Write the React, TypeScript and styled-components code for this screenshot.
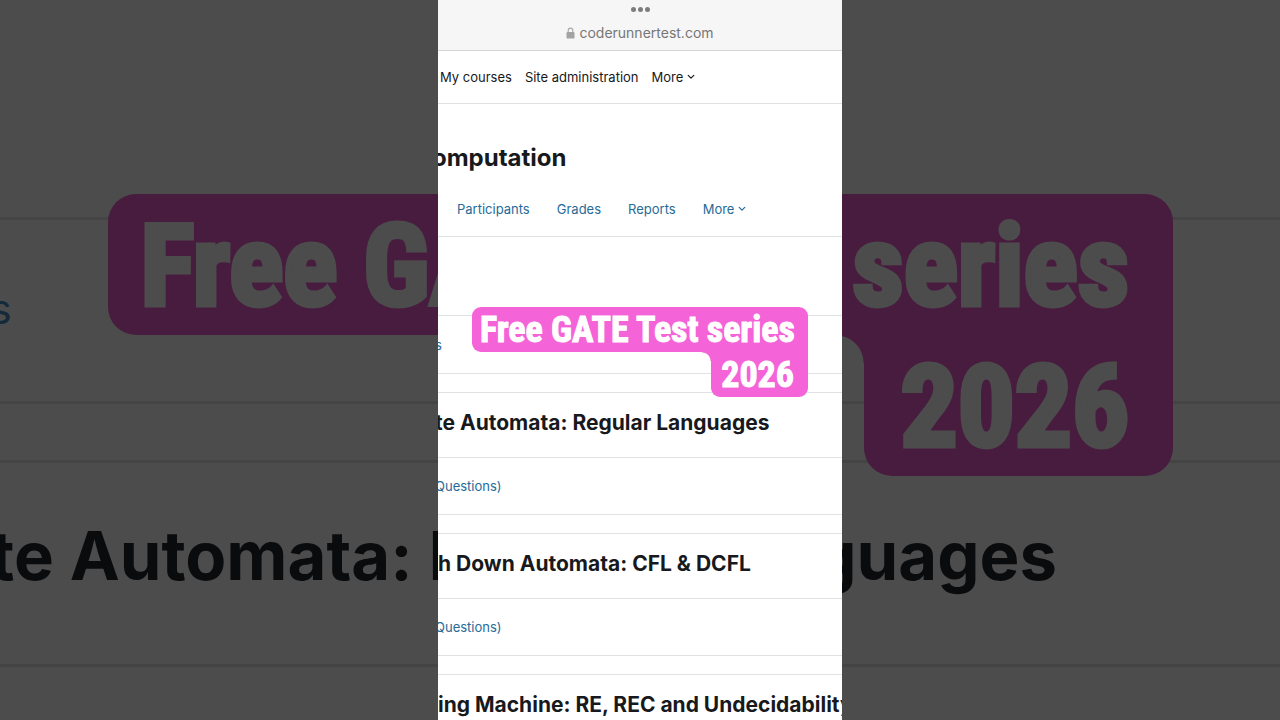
import React from "react";
import styled, { createGlobalStyle, css } from "styled-components";

const GlobalStyle = createGlobalStyle`
  * { box-sizing: border-box; }
  body {
    margin: 0;
    background: #4c4c4c;
    font-family: Inter, "Liberation Sans", sans-serif;
    color: #17191c;
  }
  h1, h2, p { margin: 0; }
  a { color: inherit; text-decoration: none; }
`;

const line = "#e1e2e4";
const dimLine = "#444444";

const Stage = styled.main`
  display: grid;
  grid-template-columns: minmax(0, 1fr);
  height: 100vh;
  overflow: hidden;
`;

/* Enlarged, darkened copy of the page behind the phone */
const Backdrop = styled.div`
  grid-area: 1 / 1;
  position: relative;
  overflow: hidden;
  background: #4c4c4c;
  color: #0a0b0d;
  padding-top: 217px;
`;

const DimRow = styled.div<{ $height: number }>`
  display: flex;
  align-items: center;
  height: ${(p) => p.$height}px;
  border-top: 3px solid ${dimLine};
  white-space: nowrap;
`;

const DimLink = styled.p`
  margin-left: -10px;
  padding-bottom: 4px;
  font-size: 41px;
  color: #14293a;
`;

const DimHeading = styled.p`
  margin-left: -10px;
  padding-bottom: 16px;
  font-size: 67px;
  font-weight: 700;
`;

const Phone = styled.div`
  grid-area: 1 / 1;
  position: relative;
  justify-self: center;
  width: 404px;
  max-width: 100%;
  overflow: hidden;
  background: #ffffff;
`;

const AddressBar = styled.header`
  display: flex;
  flex-direction: column;
  align-items: center;
  gap: 11px;
  height: 51px;
  padding-top: 7px;
  background: #f6f6f6;
  border-bottom: 1px solid #d6d6d6;
`;

const MenuButton = styled.button`
  display: flex;
  gap: 2px;
  padding: 0;
  border: 0;
  background: none;
`;

const Dot = styled.span`
  width: 5px;
  height: 5px;
  border-radius: 50%;
  background: #7d7d7d;
`;

const Address = styled.p`
  display: flex;
  align-items: center;
  gap: 4px;
  font-size: 14px;
  line-height: 20px;
  color: #777777;
`;

const SiteNav = styled.nav`
  display: flex;
  align-items: center;
  gap: 13px;
  height: 53px;
  padding-left: 2px;
  border-bottom: 1px solid ${line};
  font-size: 13px;
  white-space: nowrap;
`;

const CourseTitle = styled.h1`
  height: 78px;
  margin-left: -6px;
  padding-top: 38px;
  font-size: 24px;
  line-height: 32px;
  font-weight: 700;
`;

const Tabs = styled.nav`
  display: flex;
  align-items: center;
  gap: 27px;
  height: 55px;
  padding-left: 19px;
  border-bottom: 1px solid ${line};
  font-size: 13px;
  color: #266b98;
  white-space: nowrap;
`;

const MoreButton = styled.button`
  display: flex;
  align-items: center;
  gap: 4px;
  padding: 0;
  border: 0;
  background: none;
  font: inherit;
  color: inherit;
`;

const Sections = styled.div`
  display: flex;
  flex-direction: column;
  gap: 18px;
  padding-top: 78px;
`;

const Section = styled.section`
  border-top: 1px solid ${line};
  border-bottom: 1px solid ${line};
  white-space: nowrap;
`;

const SectionHeading = styled.h2<{ $cut?: boolean }>`
  height: 64px;
  margin-left: ${(p) => (p.$cut ? -3 : 0)}px;
  padding-top: 14px;
  font-size: 21px;
  line-height: 32px;
  font-weight: 700;
`;

const Activity = styled.div<{ $ruled?: boolean }>`
  display: flex;
  align-items: center;
  height: 57px;
  ${(p) => p.$ruled && css`border-top: 1px solid ${line};`}
  font-size: 13px;
  color: #266b98;
`;

const ActivityLink = styled.a`
  margin-left: -3px;
`;

type Size = { $large?: boolean };

const Caption = styled.div<Size>`
  position: absolute;
  top: ${(p) => (p.$large ? 194 : 307)}px;
  left: 50%;
  margin-left: ${(p) => (p.$large ? -532 : -168)}px;
  width: ${(p) => (p.$large ? 1065 : 336)}px;
  display: flex;
  flex-direction: column;
  align-items: flex-end;
  font-family: "Roboto Condensed", "Liberation Sans Narrow", sans-serif;
  font-weight: 700;
  font-size: ${(p) => (p.$large ? 113 : 36)}px;
  line-height: ${(p) => (p.$large ? 137 : 43)}px;
  -webkit-text-stroke: ${(p) => (p.$large ? 5 : 1)}px currentColor;
  color: ${(p) => (p.$large ? "#4c4c4c" : "#ffffff")};
  white-space: nowrap;
`;

const CaptionTop = styled.p<Size>`
  width: 100%;
  padding: ${(p) => (p.$large ? "4px 44px 0 32px" : "2px 14px 0 8px")};
  text-align: right;
  background: ${(p) => (p.$large ? "#481c3f" : "#f463d7")};
  border-radius: ${(p) => (p.$large ? "28px 28px 0 28px" : "9px 9px 0 9px")};
`;

const CaptionBottom = styled.p<Size>`
  position: relative;
  width: ${(p) => (p.$large ? 309 : 97)}px;
  padding: ${(p) => (p.$large ? "4px 44px 0 0" : "2px 14px 0 0")};
  text-align: right;
  background: ${(p) => (p.$large ? "#481c3f" : "#f463d7")};
  border-radius: ${(p) => (p.$large ? "0 0 28px 28px" : "0 0 9px 9px")};

  /* concave corner where the two lines meet */
  &::before {
    content: "";
    position: absolute;
    top: 0;
    right: 100%;
    width: ${(p) => (p.$large ? 28 : 9)}px;
    height: ${(p) => (p.$large ? 28 : 9)}px;
    background: radial-gradient(
      circle at 0 100%,
      transparent ${(p) => (p.$large ? 27 : 8)}px,
      ${(p) => (p.$large ? "#481c3f" : "#f463d7")} ${(p) => (p.$large ? 28 : 9)}px
    );
  }
`;

const Lock = () => (
  <svg width="9" height="12" viewBox="0 0 9 12" aria-hidden="true">
    <path d="M2.2 5.5V3.4a2.3 2.3 0 0 1 4.6 0v2.1" fill="none" stroke="#a9a9a9" strokeWidth="1.1" />
    <rect x="0.5" y="5" width="8" height="6.6" rx="1.2" fill="#a3a3a3" />
  </svg>
);

const Chevron = () => (
  <svg width="8" height="6" viewBox="0 0 8 6" aria-hidden="true">
    <path d="M1.2 1.3 4 4.1 6.8 1.3" fill="none" stroke="currentColor" strokeWidth="1.2" strokeLinecap="round" strokeLinejoin="round" />
  </svg>
);

const More = () => (
  <MoreButton type="button">
    More <Chevron />
  </MoreButton>
);

const SeriesCaption = ({ large }: { large?: boolean }) => (
  <Caption $large={large}>
    <CaptionTop $large={large}>Free GATE Test series</CaptionTop>
    <CaptionBottom $large={large}>2026</CaptionBottom>
  </Caption>
);

const sections = [
  { title: "te Automata: Regular Languages", cut: true, activity: "Questions)" },
  { title: "h Down Automata: CFL & DCFL", activity: "Questions)" },
  { title: "ing Machine: RE, REC and Undecidability", activity: "Questions)" },
];

export default function App() {
  return (
    <>
      <GlobalStyle />
      <Stage>
        <Backdrop aria-hidden="true">
          <DimRow $height={184}>
            <DimLink>s</DimLink>
          </DimRow>
          <DimRow $height={59} />
          <DimRow $height={204}>
            <DimHeading>te Automata: Regular Languages</DimHeading>
          </DimRow>
          <DimRow $height={184} />
          <SeriesCaption large />
        </Backdrop>
        <Phone>
          <AddressBar>
            <MenuButton type="button" aria-label="Window menu">
              <Dot />
              <Dot />
              <Dot />
            </MenuButton>
            <Address>
              <Lock />
              coderunnertest.com
            </Address>
          </AddressBar>
          <SiteNav>
            <a href="#courses">My courses</a>
            <a href="#admin">Site administration</a>
            <More />
          </SiteNav>
          <CourseTitle>omputation</CourseTitle>
          <Tabs>
            <a href="#participants">Participants</a>
            <a href="#grades">Grades</a>
            <a href="#reports">Reports</a>
            <More />
          </Tabs>
          <Sections>
            <Section>
              <Activity>
                <ActivityLink href="#announcements">s</ActivityLink>
              </Activity>
            </Section>
            {sections.map((s) => (
              <Section key={s.title}>
                <SectionHeading $cut={s.cut}>{s.title}</SectionHeading>
                <Activity $ruled>
                  <ActivityLink href="#quiz">{s.activity}</ActivityLink>
                </Activity>
              </Section>
            ))}
          </Sections>
          <SeriesCaption />
        </Phone>
      </Stage>
    </>
  );
}
